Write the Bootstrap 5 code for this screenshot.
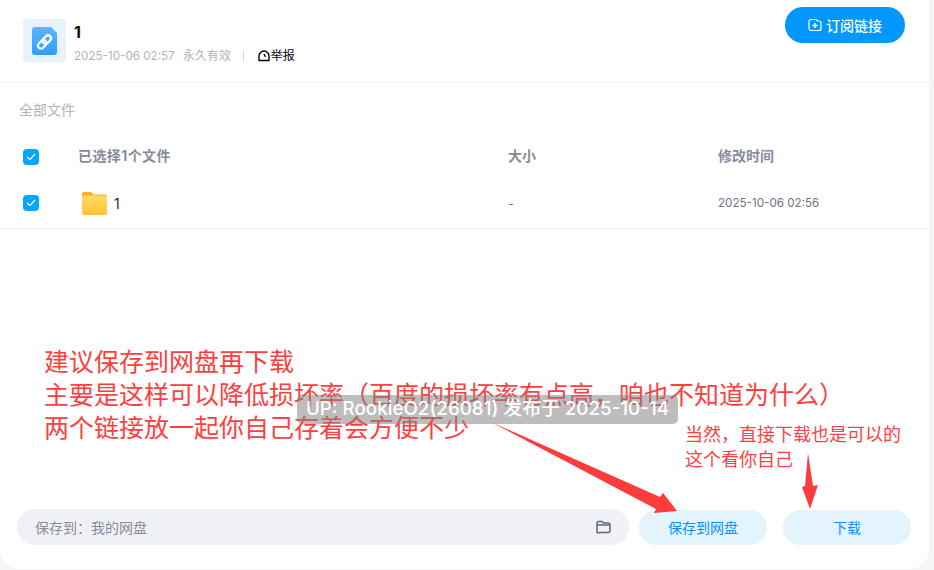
<!DOCTYPE html>
<html lang="zh-CN">
<head>
<meta charset="utf-8">
<title>1</title>
<link href="https://cdn.jsdelivr.net/npm/bootstrap@5.3.0/dist/css/bootstrap.min.css" rel="stylesheet">
<style>
html,body{height:570px;overflow:hidden}
body{background:#f5f5f6;font-family:Inter,"Noto Sans CJK SC",sans-serif;font-size:12px}
.sheet{position:relative;width:929px;height:569px;background:#fff;border-radius:0 0 20px 20px}
.head-bar{height:83px;padding:7px 24px 0 23px;border-bottom:1px solid #f2f2f7}
.file-tile{width:43px;height:43px;margin-top:12px;background:#e6f3ff;border-radius:4px}
.head-text{margin-left:8px;margin-top:13px}
.head-title{font-size:16px;line-height:24px;font-weight:700;color:#06070c}
.head-meta{color:#afb3bf;line-height:18px;margin-top:3px}
.stamp-time{font-size:11.65px}
.meta-gap{margin-left:8px}
.meta-rule{width:1px;height:12px;background:#dcdde3;margin:0 14px 0 12px}
.report{color:#06070c}
.sub-btn{width:120px;height:36px;background:#0098ff;color:#fff;border:0;border-radius:18px;font-size:14px;font-weight:500;padding:0}
.sub-btn:hover{background:#0098ff;color:#fff}
.crumb{padding:18px 0 0 19px;line-height:18px;font-size:14px;color:#afb3bf}
.t-row{padding-left:23px}
.t-head{height:46px;margin-top:13px;margin-bottom:2px;color:#878c9c;font-weight:700;font-size:14px}
.t-head .tick{margin-top:4px}
.t-head .c-name span{letter-spacing:.4px}
.t-body{height:49px;color:#6f7483;border-bottom:1px solid #eeeef3}
.t-body .tick{margin-top:-2px}
.tick{width:16px;height:16px;border-radius:4px;background:#06a7ff;flex:none}
.c-name{width:469px;padding-left:39px}
.c-size{width:210px}
.folder{margin-left:4px;margin-right:7px;margin-top:-2px}
.f-name{font-size:14px;color:#25262b;margin-top:-2px}
.c-date{font-size:11.65px}
.foot-bar{left:17px;right:18px;bottom:24px;position:absolute}
.save-path{width:612px;height:36px;background:#f0f1f6;border-radius:18px;padding:0 18px;color:#878c9c;font-size:14px}
.soft-btn{width:128px;height:35px;background:#e3f4ff;color:#0a8fff;border:0;border-radius:18px;font-size:14px;padding:0}
.soft-btn:hover{background:#e3f4ff;color:#0a8fff}
.gap-a{margin-left:10px}
.gap-b{margin-left:16px}
.mark-layer{position:absolute;inset:0;pointer-events:none}
.note-big{position:absolute;left:44px;top:344px;font-family:"Noto Sans CJK SC",sans-serif;font-size:25px;line-height:33px;color:#ff4040;white-space:nowrap}
.note-small{position:absolute;left:685px;top:421px;font-family:"Noto Sans CJK SC",sans-serif;font-size:18px;line-height:25px;color:#ff4040;white-space:nowrap}
.stamp{position:absolute;left:297px;top:395px;width:381px;height:29px;background:rgba(128,128,128,.52);border-radius:5px;color:#fff;font-size:18.8px;font-weight:500;line-height:27px;text-align:center;white-space:nowrap}
.arrows{position:absolute;left:0;top:0}
</style>
</head>
<body>
<div class="sheet">
  <div class="head-bar d-flex justify-content-between align-items-start">
    <div class="d-flex">
      <div class="file-tile d-flex align-items-center justify-content-center">
        <svg width="25" height="28" viewBox="0 0 25 28"><defs><linearGradient id="blu" x1="0" y1="0" x2="0" y2="1"><stop offset="0" stop-color="#5cb5ff"/><stop offset="1" stop-color="#2e9eff"/></linearGradient></defs><path d="M3 0h16l6 6v19a3 3 0 0 1-3 3H3a3 3 0 0 1-3-3V3a3 3 0 0 1 3-3z" fill="url(#blu)"/><g transform="rotate(-45 12.500 15)" fill="none" stroke="#fff" stroke-width="2.200"><rect x="4.500" y="12" width="9.500" height="6" rx="3"/><rect x="11" y="12" width="9.500" height="6" rx="3"/></g></svg>
      </div>
      <div class="head-text">
        <div class="head-title">1</div>
        <div class="head-meta d-flex align-items-center">
          <span class="stamp-time">2025-10-06 02:57</span><span class="meta-gap">永久有效</span><span class="meta-rule"></span>
          <span class="report d-flex align-items-center"><svg width="13" height="12" viewBox="0 0 13 12"><path d="M1 10.500V6a5 5 0 0 1 10 0v4.500z" fill="none" stroke="#06070c" stroke-width="1.400"/><path d="M6 4l1.500 3" stroke="#06070c" stroke-width="1.400" fill="none"/></svg>举报</span>
        </div>
      </div>
    </div>
    <button class="btn sub-btn d-flex align-items-center justify-content-center" type="button">
      <svg class="me-1" width="14" height="14" viewBox="0 0 14 14" fill="none" stroke="#fff" stroke-width="1.200"><path d="M3 1.500h5l1.500 1.500H11a2 2 0 0 1 2 2v5.500a2 2 0 0 1-2 2H3a2 2 0 0 1-2-2v-7a2 2 0 0 1 2-2z"/><path d="M7 5v5M4.500 7.500h5" stroke-width="1.400"/></svg>订阅链接
    </button>
  </div>
  <div class="crumb">全部文件</div>
  <div class="t-row t-head d-flex align-items-center">
    <span class="tick d-flex align-items-center justify-content-center"><svg width="10" height="8" viewBox="0 0 10 8"><path d="M1 4l3 2.500L9 1" fill="none" stroke="#fff" stroke-width="1.200"/></svg></span>
    <div class="c-name"><span>已选择1个文件</span></div>
    <div class="c-size">大小</div>
    <div>修改时间</div>
  </div>
  <div class="t-row t-body d-flex align-items-center">
    <span class="tick d-flex align-items-center justify-content-center"><svg width="10" height="8" viewBox="0 0 10 8"><path d="M1 4l3 2.500L9 1" fill="none" stroke="#fff" stroke-width="1.200"/></svg></span>
    <div class="c-name d-flex align-items-center">
      <svg class="folder" width="25" height="23" viewBox="0 0 25 23"><defs><linearGradient id="yel" x1="0" y1="0" x2="0" y2="1"><stop offset="0" stop-color="#ffdc6a"/><stop offset="1" stop-color="#ffc22e"/></linearGradient></defs><path d="M2 0h7l3 2.500h11a2 2 0 0 1 2 2V8H0V2a2 2 0 0 1 2-2z" fill="#ffb01f"/><rect y="3.500" width="25" height="19.500" rx="2.500" fill="url(#yel)"/></svg>
      <span class="f-name">1</span>
    </div>
    <div class="c-size">-</div>
    <div class="c-date">2025-10-06 02:56</div>
  </div>
  <div class="foot-bar d-flex align-items-center">
    <div class="save-path d-flex align-items-center justify-content-between">
      <span>保存到：我的网盘</span>
      <svg width="15" height="14" viewBox="0 0 15 14" fill="none" stroke="#5f6678" stroke-width="1.500"><path d="M1 3a1.500 1.500 0 0 1 1.500-1.500h3.500l1.500 1.500h5a1.500 1.500 0 0 1 1.500 1.500v6.500a1.500 1.500 0 0 1-1.500 1.500h-9A1.500 1.500 0 0 1 1 11z"/><path d="M1 5h13"/></svg>
    </div>
    <button class="btn soft-btn gap-a" type="button">保存到网盘</button>
    <button class="btn soft-btn gap-b" type="button">下载</button>
  </div>
  <div class="mark-layer">
    <div class="note-big">建议保存到网盘再下载<br>主要是这样可以降低损坏率（百度的损坏率有点高，咱也不知道为什么）<br>两个链接放一起你自己存着会方便不少</div>
    <div class="note-small">当然，直接下载也是可以的<br>这个看你自己</div>
    <div class="stamp">UP: RookieO2(26081) 发布于 2025-10-14</div>
    <svg class="arrows" width="929" height="569"><path d="M491 422L660 497L663 493L677 511L654 513L656 509z" fill="#ff3b3b"/><path d="M808 453L813 486L818 485L810 509L802 487L805 486z" fill="#ff3b3b"/></svg>
  </div>
</div>
<script src="https://cdn.jsdelivr.net/npm/bootstrap@5.3.0/dist/js/bootstrap.bundle.min.js"></script>
</body>
</html>
